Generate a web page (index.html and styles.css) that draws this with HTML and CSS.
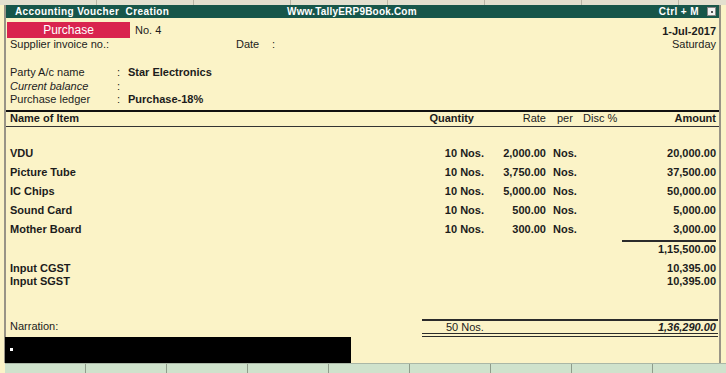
FILE: index.html
```html
<!DOCTYPE html>
<html lang="en">
<head>
    <meta charset="UTF-8">
    <title>Accounting Voucher Creation</title>
    <link rel="stylesheet" href="styles.css">
</head>
<body>
    <div class="top-strip">
        <span></span><span></span><span></span><span></span><span></span><span></span><span></span>
    </div>

    <div class="frame">
        <div class="title-bar">
            <span class="title">Accounting Voucher&nbsp; Creation</span>
            <span class="site">Www.TallyERP9Book.Com</span>
            <span class="shortcut">Ctrl + M</span>
            <span class="close-box"><i></i></span>
        </div>

        <div class="voucher">
            <div class="head-row">
                <div class="head-left">
                    <div class="type-row">
                        <span class="type-badge">Purchase</span>
                        <span class="vch-no">No. 4</span>
                    </div>
                    <div class="supplier-row">
                        <span class="supplier">Supplier invoice no.:</span>
                        <span class="date-label">Date</span>
                        <span class="colon">:</span>
                    </div>
                </div>
                <div class="head-right">
                    <div class="date">1-Jul-2017</div>
                    <div class="day">Saturday</div>
                </div>
            </div>

            <div class="party">
                <div class="party-row"><span class="p-label">Party A/c name</span><span class="p-colon">:</span><b>Star Electronics</b></div>
                <div class="party-row"><span class="p-label italic">Current balance</span><span class="p-colon">:</span></div>
                <div class="party-row"><span class="p-label">Purchase ledger</span><span class="p-colon">:</span><b>Purchase-18%</b></div>
            </div>

            <div class="grid-row col-head">
                <span class="c-name">Name of Item</span>
                <span class="c-qty">Quantity</span>
                <span class="c-rate">Rate</span>
                <span class="c-per">per</span>
                <span class="c-disc">Disc %</span>
                <span class="c-amt">Amount</span>
            </div>

            <div class="items">
                <div class="grid-row item">
                    <span class="c-name">VDU</span><span class="c-qty">10 Nos.</span><span class="c-rate">2,000.00</span><span class="c-per">Nos.</span><span class="c-disc"></span><span class="c-amt">20,000.00</span>
                </div>
                <div class="grid-row item">
                    <span class="c-name">Picture Tube</span><span class="c-qty">10 Nos.</span><span class="c-rate">3,750.00</span><span class="c-per">Nos.</span><span class="c-disc"></span><span class="c-amt">37,500.00</span>
                </div>
                <div class="grid-row item">
                    <span class="c-name">IC Chips</span><span class="c-qty">10 Nos.</span><span class="c-rate">5,000.00</span><span class="c-per">Nos.</span><span class="c-disc"></span><span class="c-amt">50,000.00</span>
                </div>
                <div class="grid-row item">
                    <span class="c-name">Sound Card</span><span class="c-qty">10 Nos.</span><span class="c-rate">500.00</span><span class="c-per">Nos.</span><span class="c-disc"></span><span class="c-amt">5,000.00</span>
                </div>
                <div class="grid-row item">
                    <span class="c-name">Mother Board</span><span class="c-qty">10 Nos.</span><span class="c-rate">300.00</span><span class="c-per">Nos.</span><span class="c-disc"></span><span class="c-amt">3,000.00</span>
                </div>
            </div>

            <div class="grid-row subtotal">
                <span class="c-name"></span><span class="c-qty"></span><span class="c-rate"></span><span class="c-per"></span><span class="c-disc"></span><span class="c-amt">1,15,500.00</span>
            </div>

            <div class="taxes">
                <div class="grid-row tax"><span class="c-name">Input CGST</span><span class="c-amt">10,395.00</span></div>
                <div class="grid-row tax"><span class="c-name">Input SGST</span><span class="c-amt">10,395.00</span></div>
            </div>

            <div class="total-row">
                <span class="narration">Narration:</span>
                <div class="total-box">
                    <span class="total-qty">50 Nos.</span>
                    <span class="total-amt">1,36,290.00</span>
                </div>
            </div>

            <div class="narration-input"><i></i></div>
        </div>
    </div>

    <div class="bottom-strip">
        <span></span><span></span><span></span><span></span><span></span><span></span><span></span><span></span><span></span>
    </div>
</body>
</html>
```

FILE: styles.css
```css
body {
    margin: 0;
    background-color: #fbf3c7;
    font-family: "Liberation Sans", Arial, sans-serif;
    font-size: 11px;
    color: #1c1c1c;
    width: 726px;
    height: 373px;
    overflow: hidden;
}
.top-strip {
    height: 5px;
    background-color: #e3e0cf;
    display: flex;
}
.top-strip span {
    width: 96px;
    border-right: 1px solid #b9b6a6;
    flex: none;
}
.frame {
    margin-left: 4px;
    width: 713px;
    border-left: 2px solid #999486;
    border-right: 2px solid #999486;
}
.title-bar {
    height: 13px;
    background-color: #17564a;
    color: #fff;
    font-weight: bold;
    font-size: 10px;
    line-height: 13px;
    display: flex;
    align-items: center;
    padding-left: 9px;
    letter-spacing: 0.4px;
}
.title {
    width: 272px;
}
.site {
    flex: 1;
    letter-spacing: 0.2px;
}
.shortcut {
    margin-right: 8px;
}
.close-box {
    width: 7px;
    height: 7px;
    background-color: #f2f2f2;
    border: 1px solid #888;
    margin-right: 3px;
    display: flex;
    align-items: center;
    justify-content: center;
}
.close-box i {
    width: 2px;
    height: 2px;
    background-color: #555;
}
.voucher {
    padding-top: 4px;
}
.head-row {
    display: flex;
    justify-content: space-between;
}
.type-row {
    display: flex;
    align-items: center;
    height: 16px;
}
.type-badge {
    width: 123px;
    margin-left: 1px;
    height: 16px;
    line-height: 16px;
    background-color: #d9244f;
    color: #fff;
    text-align: center;
    font-size: 12px;
}
.vch-no {
    margin-left: 5px;
}
.supplier-row {
    height: 13px;
    line-height: 12px;
    display: flex;
    padding-left: 4px;
}
.supplier {
    width: 226px;
}
.date-label {
    width: 36px;
}
.head-right {
    text-align: right;
    padding-right: 3px;
    padding-top: 2px;
}
.date {
    font-weight: bold;
    line-height: 14px;
}
.day {
    line-height: 13px;
}
.party {
    margin-top: 15px;
    padding-left: 4px;
}
.party-row {
    height: 13.5px;
    line-height: 13px;
    display: flex;
}
.p-label {
    width: 107px;
}
.p-colon {
    width: 11px;
}
.italic {
    font-style: italic;
}
.grid-row {
    display: grid;
    grid-template-columns: 406px 68px 62px 34px 42px 94px;
    padding-left: 4px;
    padding-right: 3px;
}
.col-head {
    margin-top: 3px;
    border-top: 2px solid #111;
    border-bottom: 1px solid #333;
    font-weight: bold;
    height: 14px;
    line-height: 13px;
}
.col-head .c-qty {
    text-align: right;
    padding-right: 10px;
}
.col-head .c-per {
    padding-left: 11px;
    font-weight: normal;
}
.col-head .c-disc {
    padding-left: 3px;
    font-weight: normal;
}
.col-head .c-rate {
    font-weight: normal;
}
.c-qty, .c-rate, .c-amt {
    text-align: right;
}
.c-per {
    padding-left: 7px;
}
.items {
    margin-top: 17px;
}
.item {
    height: 19px;
    line-height: 19px;
    font-weight: bold;
}
.subtotal {
    margin-top: 1px;
    font-weight: bold;
    line-height: 14px;
}
.subtotal .c-amt {
    border-top: 2px solid #2b2b2b;
}
.taxes {
    margin-top: 6px;
}
.tax {
    grid-template-columns: 1fr 94px;
    font-weight: bold;
    line-height: 13px;
}
.total-row {
    margin-top: 31px;
    display: flex;
    align-items: center;
    padding-left: 4px;
}
.narration {
    width: 412px;
    line-height: 13px;
    padding-bottom: 3px;
}
.total-box {
    flex: 1;
    display: flex;
    justify-content: space-between;
    border-top: 2px solid #2b2b2b;
    border-bottom: 4px double #2b2b2b;
    height: 12px;
    line-height: 12px;
    padding-left: 24px;
    margin-right: 1px;
    padding-right: 2px;
}
.total-amt {
    font-weight: bold;
    font-style: italic;
}
.narration-input {
    margin-left: -1px;
    width: 346px;
    height: 26px;
    background-color: #000;
    display: flex;
    align-items: center;
}
.narration-input i {
    width: 3px;
    height: 3px;
    background-color: #fff;
    margin-left: 5px;
}
.bottom-strip {
    height: 10px;
    background-color: #cfe2cc;
    display: flex;
    margin-left: 5px;
    border-top: 1px solid #aab7a6;
}
.bottom-strip span {
    width: 80px;
    border-right: 1px solid #8f9c8b;
    flex: none;
}
```
